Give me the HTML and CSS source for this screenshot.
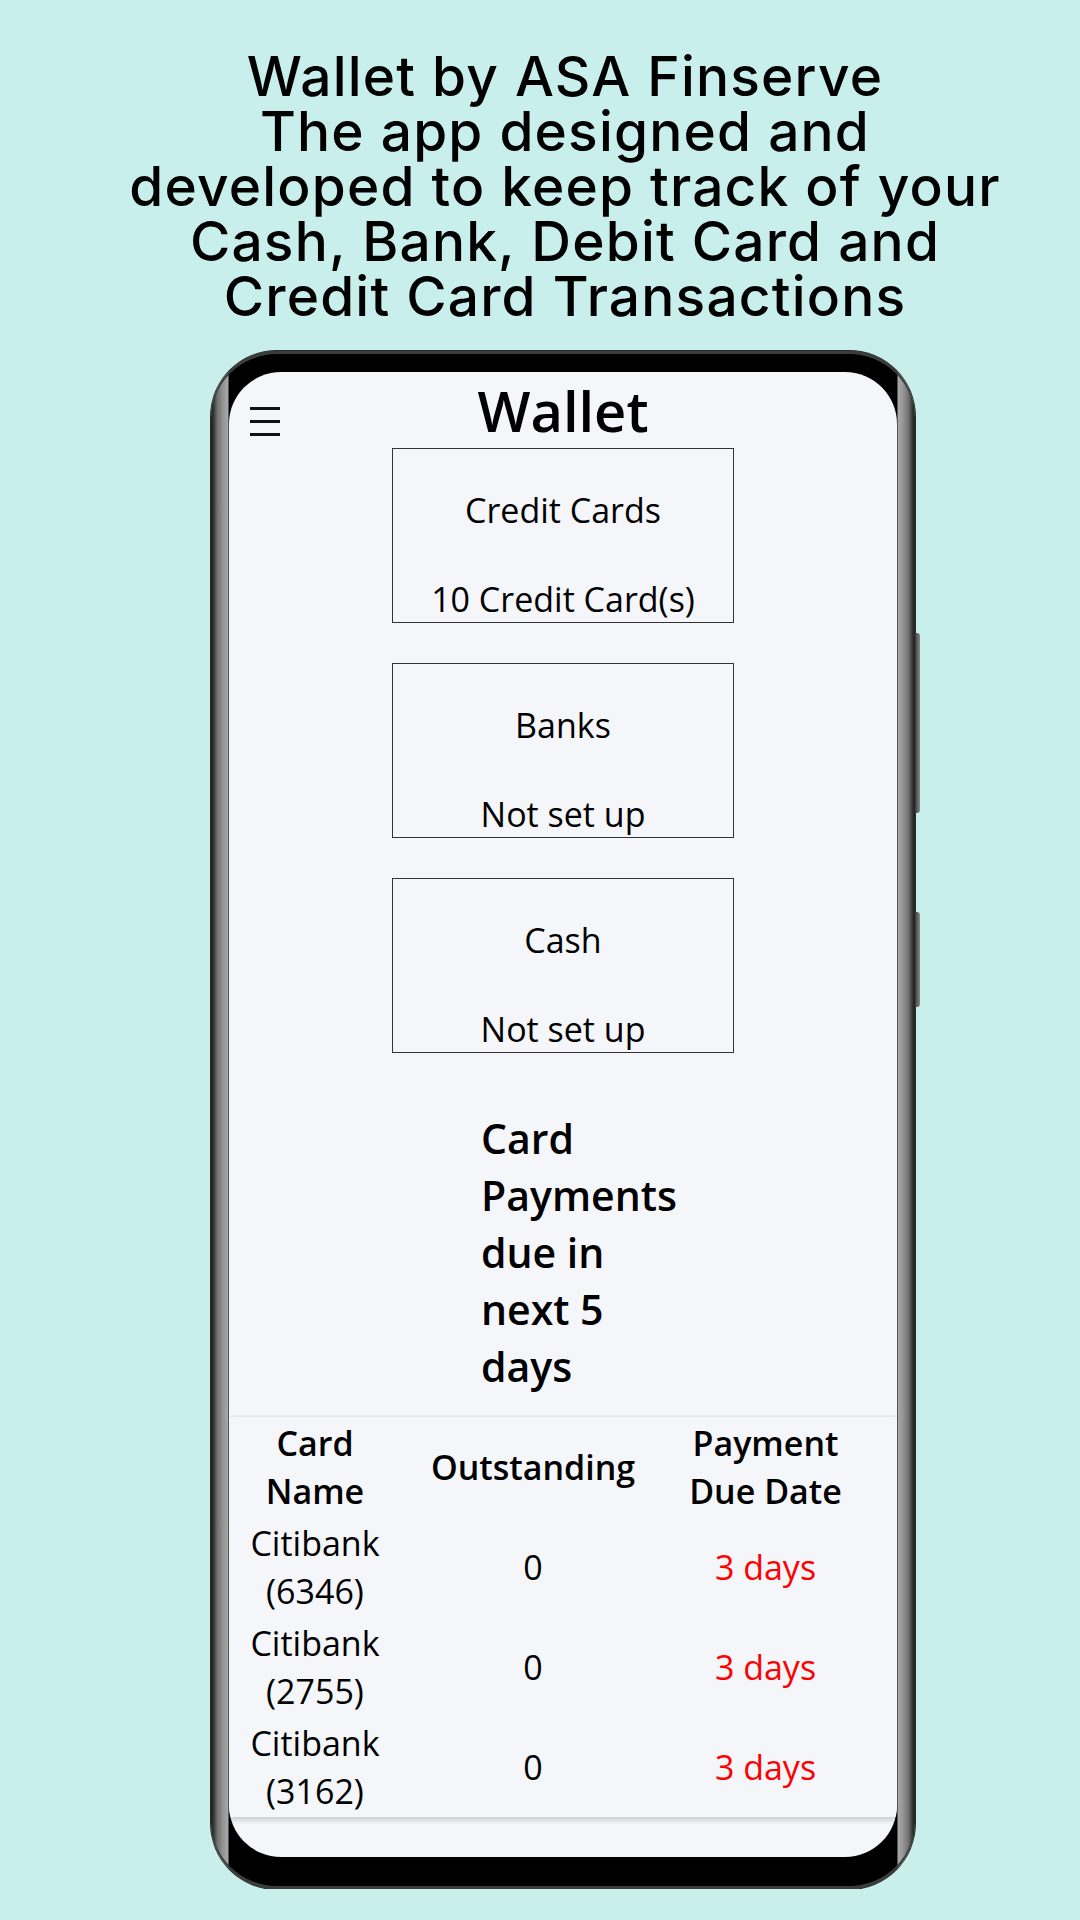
FILE: index.html
```html
<!DOCTYPE html>
<html lang="en">
<head>
  <meta charset="UTF-8" />
  <title>Wallet by ASA Finserve</title>
  <link rel="stylesheet" href="styles.css">
</head>
<body>

<h1 class="promo">Wallet by ASA Finserve<br>The app designed and<br>developed to keep track of your<br>Cash, Bank, Debit Card and<br>Credit Card Transactions</h1>

<div class="phone">
  <span class="side-btn power"></span>
  <span class="side-btn volume"></span>

  <div class="screen">
    <div class="app-bar">
      <div class="menu"><span></span><span></span><span></span></div>
      <h2 class="app-title">Wallet</h2>
    </div>

    <div class="tiles">
      <div class="tile">
        <div class="tile-name">Credit Cards</div>
        <div class="tile-value">10 Credit Card(s)</div>
      </div>
      <div class="tile">
        <div class="tile-name">Banks</div>
        <div class="tile-value">Not set up</div>
      </div>
      <div class="tile">
        <div class="tile-name">Cash</div>
        <div class="tile-value">Not set up</div>
      </div>
    </div>

    <h3 class="due-title">Card Payments due in next 5 days</h3>

    <div class="table-card">
      <table class="due-table">
        <colgroup>
          <col class="col-name">
          <col class="col-amount">
          <col class="col-date">
        </colgroup>
        <thead>
          <tr>
            <th>Card Name</th>
            <th>Outstanding</th>
            <th>Payment Due Date</th>
          </tr>
        </thead>
        <tbody>
          <tr>
            <td>Citibank (6346)</td>
            <td>0</td>
            <td class="due">3 days</td>
          </tr>
          <tr>
            <td>Citibank (2755)</td>
            <td>0</td>
            <td class="due">3 days</td>
          </tr>
          <tr>
            <td>Citibank (3162)</td>
            <td>0</td>
            <td class="due">3 days</td>
          </tr>
        </tbody>
      </table>
    </div>
  </div>
</div>

</body>
</html>
```

FILE: styles.css
```css
body {
  margin: 0;
  background: #c8efeb;
  font-family: 'Open Sans', 'Noto Sans', sans-serif;
  color: #000;
}
.promo {
  margin: 0;
  padding: 49px 0 0 50px;
  font-family: 'Inter', 'Lato', sans-serif;
  font-weight: 500;
  font-size: 55px;
  letter-spacing: 1.2px;
  line-height: 55px;
  text-align: center;
}

/* phone mockup */
.phone {
  position: relative;
  width: 704px;
  margin: 27px 0 0 211px;
  padding: 21px 18px 32px;
  box-sizing: border-box;
  border-radius: 66px;
  background: linear-gradient(to right,
    #1c1c1c 0, #3a3a3a 3px, #6d6d6d 6px, #8f8f8f 11px, #a9a9a9 17px, #000 18px,
    #000 calc(100% - 18px), #a9a9a9 calc(100% - 17px), #8f8f8f calc(100% - 11px),
    #6d6d6d calc(100% - 6px), #3a3a3a calc(100% - 3px), #1c1c1c 100%);
  box-shadow: 0 0 0 1px #2b2b2b, inset 0 3px 0 #3c3c3c, inset 0 -3px 0 #3c3c3c;
}
.side-btn {
  position: absolute;
  right: -5px;
  width: 5px;
  background: linear-gradient(to right, #3a3a3a, #8a8a8a);
  border-radius: 0 3px 3px 0;
}
.side-btn.power { top: 282px; height: 180px; }
.side-btn.volume { top: 561px; height: 95px; }

.screen {
  height: 1485px;
  background: #f5f6fa;
  border-radius: 52px;
  overflow: hidden;
}

.app-bar {
  display: grid;
  grid-template-columns: 1fr auto 1fr;
  height: 76px;
}
.menu {
  display: flex;
  flex-direction: column;
  gap: 10px;
  width: 30px;
  margin: 35px 0 0 21px;
}
.menu span {
  height: 3px;
  background: #111;
}
.app-title {
  margin: 0;
  font-size: 56px;
  font-weight: 600;
  line-height: 76px;
}

.tiles {
  display: flex;
  flex-direction: column;
  align-items: center;
  gap: 40px;
}
.tile {
  width: 342px;
  height: 175px;
  box-sizing: border-box;
  padding-top: 38px;
  border: 1px solid #333;
  text-align: center;
  font-size: 34px;
  line-height: 46px;
}
.tile-value {
  margin-top: 43px;
}

.due-title {
  width: 205px;
  margin: 57px 0 22px 252px;
  font-size: 41px;
  font-weight: 600;
  line-height: 57px;
}

.table-card {
  background: #f5f6fa;
  box-shadow: 0 -1px 3px rgb(0 0 0 / 0.06), 0 3px 6px rgb(0 0 0 / 0.18);
}
.due-table {
  width: 637px;
  table-layout: fixed;
  border-collapse: collapse;
  font-size: 34px;
  line-height: 48px;
}
.col-name { width: 172px; }
.col-amount { width: 264px; }
.col-date { width: 201px; }
.due-table th, .due-table td {
  padding: 2px 0;
  text-align: center;
  vertical-align: middle;
}
.due-table th {
  font-weight: 600;
}
.due-table td.due {
  color: #ff0000;
}
```
